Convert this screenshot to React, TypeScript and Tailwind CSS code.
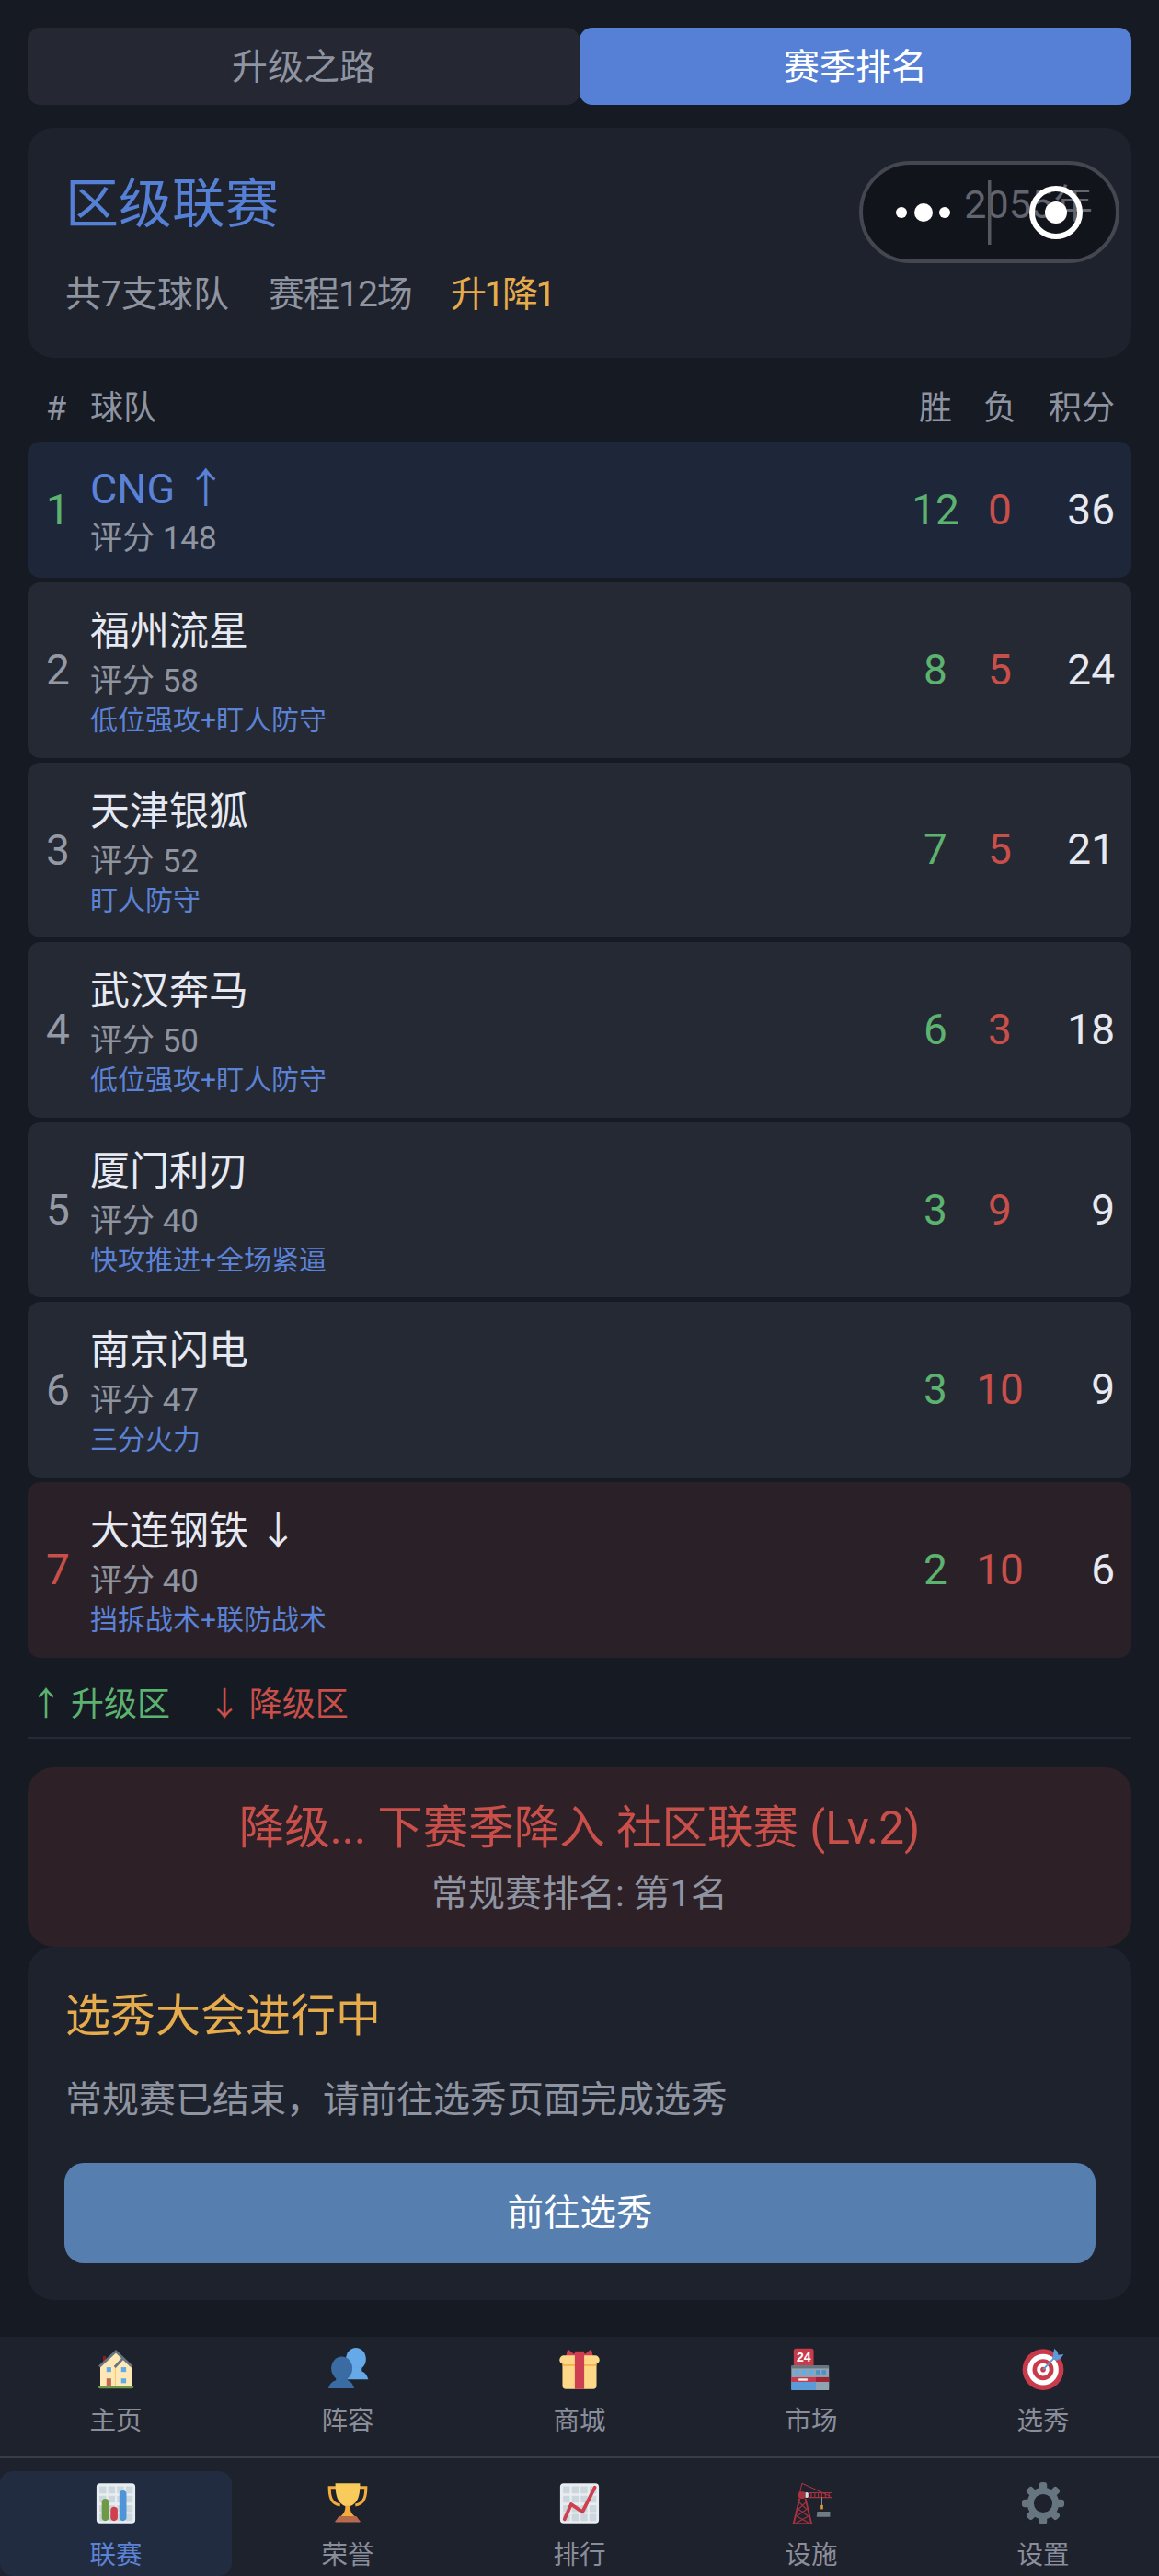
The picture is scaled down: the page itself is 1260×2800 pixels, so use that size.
const teams = [
  { rank: 1, name: "CNG ↑", score: "评分 148", tag: "", w: 12, l: 0, pts: 36, kind: "me" },
  { rank: 2, name: "福州流星", score: "评分 58", tag: "低位强攻+盯人防守", w: 8, l: 5, pts: 24, kind: "" },
  { rank: 3, name: "天津银狐", score: "评分 52", tag: "盯人防守", w: 7, l: 5, pts: 21, kind: "" },
  { rank: 4, name: "武汉奔马", score: "评分 50", tag: "低位强攻+盯人防守", w: 6, l: 3, pts: 18, kind: "" },
  { rank: 5, name: "厦门利刃", score: "评分 40", tag: "快攻推进+全场紧逼", w: 3, l: 9, pts: 9, kind: "" },
  { rank: 6, name: "南京闪电", score: "评分 47", tag: "三分火力", w: 3, l: 10, pts: 9, kind: "" },
  { rank: 7, name: "大连钢铁 ↓", score: "评分 40", tag: "挡拆战术+联防战术", w: 2, l: 10, pts: 6, kind: "down" },
];

function Grid() {
  const cells = [];
  for (const x of [4, 11.5, 19, 26.5]) {
    for (const y of [3.5, 11.5, 19.5, 27]) {
      cells.push(<rect key={x + "-" + y} x={x} y={y} width="5.8" height="6" rx="0.6" fill="#CCD6DD" />);
    }
  }
  return (
    <>
      <rect x="1.5" y="1" width="33" height="34" rx="3" fill="#E8EDF1" />
      {cells}
    </>
  );
}

function Icon({ name }: { name: string }) {
  return (
    <svg viewBox="0 0 36 36" className="w-[46px] h-[46px] shrink-0">
      {name === "home" && (
        <>
          <rect x="7" y="7" width="2.4" height="6" fill="#8F1C24" />
          <path d="M4.700 15.500 18 3 31.300 15.500V33H4.700z" fill="#FFE8B6" />
          <path d="M17.500 16V33" stroke="#F4C86F" strokeWidth="0.800" />
          <path d="M3.900 16 18 3 31.700 16" fill="none" stroke="#66757F" strokeWidth="2.200" />
          <path d="M17 16.500 24 9" fill="none" stroke="#66757F" strokeWidth="2.200" />
          <rect x="10" y="16.500" width="4" height="4" fill="#5DADEC" />
          <rect x="22.500" y="16.500" width="4.200" height="4" fill="#5DADEC" />
          <rect x="22.500" y="26" width="4.200" height="4" fill="#5DADEC" />
          <rect x="10" y="26" width="4" height="6.500" fill="#C1694F" />
          <rect x="3" y="32" width="30" height="2.600" rx="1.300" fill="#6C9A4A" />
        </>
      )}
      {name === "team" && (
        <>
          <ellipse cx="25" cy="9.500" rx="8.500" ry="9.500" fill="#65A9E8" />
          <path d="M20 17h10v3c3 1 4.500 3.500 5.500 6.800H16c1-3.300 2-5.800 4-6.800z" fill="#65A9E8" />
          <ellipse cx="13" cy="17.500" rx="9" ry="10" fill="#3A6CA3" />
          <path d="M8 25h10v2.500c3 1 4.500 3.500 5.500 7H1.500c1-3.500 3-6 6.500-7z" fill="#3A6CA3" />
        </>
      )}
      {name === "gift" && (
        <>
          <path d="M8 1 13 5 18 3.500 23 5 28 1l2 8H6z" fill="#CF3F52" />
          <path d="M3.500 14V32a3 3 0 0 0 3 3h23a3 3 0 0 0 3-3V14z" fill="#FDD888" />
          <rect x="3.500" y="13.500" width="29" height="2" fill="#F4A93C" opacity="0.8" />
          <rect x="1" y="6.500" width="34" height="7.500" rx="3.700" fill="#FDD888" />
          <rect x="14" y="3" width="8" height="32" fill="#CF3F52" />
        </>
      )}
      {name === "market" && (
        <>
          <rect x="3" y="0.500" width="17" height="15.500" rx="2" fill="#C93A4A" />
          <text x="11.500" y="12" textAnchor="middle" fontSize="11" fontWeight="700" fill="#fff" fontFamily="Liberation Sans, sans-serif">24</text>
          <rect x="1" y="15" width="32" height="21" rx="1.500" fill="#8FA3B3" />
          <rect x="1" y="15" width="32" height="2.500" fill="#66757F" />
          <rect x="4" y="19" width="3.500" height="3.500" fill="#5DADEC" />
          <rect x="10" y="19" width="3.500" height="3.500" fill="#5DADEC" />
          <rect x="16" y="19" width="3.500" height="3.500" fill="#5DADEC" />
          <rect x="22" y="19" width="3.500" height="3.500" fill="#4A90C8" />
          <rect x="27" y="19" width="3.500" height="3.500" fill="#4A90C8" />
          <rect x="1" y="25" width="32" height="4" fill="#C93A4A" />
          <rect x="22" y="25" width="11" height="4" fill="#A0232F" />
          <rect x="7" y="26" width="8" height="2" rx="1" fill="#F5E6E8" />
          <rect x="1" y="29" width="21" height="7" fill="#5B9BD8" />
          <rect x="22" y="29" width="11" height="7" fill="#8FA3B3" />
        </>
      )}
      {name === "target" && (
        <>
          <circle cx="18" cy="18.500" r="17.500" fill="#C93A4A" />
          <circle cx="18" cy="18.500" r="13.200" fill="#fff" />
          <circle cx="18" cy="18.500" r="9" fill="#C93A4A" />
          <circle cx="18" cy="18.500" r="5.300" fill="#fff" />
          <circle cx="18" cy="18.500" r="2.200" fill="#C93A4A" />
          <path d="M18 18.500 29 7" stroke="#5B9BD8" strokeWidth="1.500" />
          <path d="M26 9 27.500 0.500 30 3 31 6 35.500 5.500 33 9 29 11z" fill="#5B9BD8" />
        </>
      )}
      {name === "league" && (
        <>
          <Grid />
          <rect x="6" y="14" width="6" height="19" rx="3" fill="#6E9A44" />
          <rect x="13.500" y="21" width="6" height="12" rx="3" fill="#CF3F4D" />
          <rect x="21" y="7" width="6" height="26" rx="3" fill="#4E94D8" />
        </>
      )}
      {name === "trophy" && (
        <>
          <path d="M9 4.500H2.500c0 7 1 14 9 15M27 4.500h6.500c0 7-1 14-9 15" fill="none" stroke="#F4AC3C" strokeWidth="2.400" />
          <path d="M7.500 1h21c0 9-1 18-10.500 20C8.500 19 7.500 10 7.500 1z" fill="#F9CB5C" />
          <path d="M16 20h4c0 4 1 7 4 9H12c3-2 4-5 4-9z" fill="#F4AC3C" />
          <path d="M11 29h14c1 0 1.500 2 3 3.500 1 .5 1 1.500 0 1.500H8c-1 0-1-1 0-1.500C9.500 31 10 29 11 29z" fill="#B9694C" />
        </>
      )}
      {name === "rank" && (
        <>
          <Grid />
          <path d="M5.300 31.500 10.900 18.800 20.500 25.300 31 4.500" fill="none" stroke="#CF3F4D" strokeWidth="3" strokeLinecap="round" strokeLinejoin="round" />
        </>
      )}
      {name === "crane" && (
        <g stroke="#A8323E" fill="none">
          <path d="M3 35 8 14M18 35 13 14M2 35.300H19" strokeWidth="1.500" />
          <path d="M7.500 17 14 23 5.500 29 16.500 35M13.500 17 7 23 15.500 29 4.500 35" strokeWidth="0.900" />
          <path d="M10 1 8 10M10 1 34 12" strokeWidth="0.800" />
          <rect x="7" y="8" width="6" height="6" rx="2" fill="#A8323E" strokeWidth="0" />
          <rect x="13" y="8.700" width="2.500" height="4.500" fill="#D9DEE2" stroke="none" />
          <path d="M15 9h21M15 13h21" strokeWidth="0.900" />
          <path d="M18 9v4M21 9v4M24 9v4M27 9v4M30 9v4M33 9v4" strokeWidth="0.900" />
          <path d="M27 13v8" stroke="#A7B1B8" strokeWidth="0.600" />
          <rect x="26" y="19.500" width="2" height="3.500" fill="#E8982E" stroke="none" />
          <path d="M23 25h11v4.500H22.500z" fill="#707C85" stroke="none" />
        </g>
      )}
      {name === "gear" && (
        <>
          <circle cx="18" cy="18" r="10.700" fill="none" stroke="#66757F" strokeWidth="5.600" />
          {[0, 45, 90, 135, 180, 225, 270, 315].map((a) => (
            <rect key={a} x="14.700" y="0" width="6.600" height="7" rx="2.400" fill="#66757F" transform={`rotate(${a} 18 18)`} />
          ))}
        </>
      )}
    </svg>
  );
}

const navTop = [
  { icon: "home", label: "主页" },
  { icon: "team", label: "阵容" },
  { icon: "gift", label: "商城" },
  { icon: "market", label: "市场" },
  { icon: "target", label: "选秀" },
];

const navBottom = [
  { icon: "league", label: "联赛", active: true },
  { icon: "trophy", label: "荣誉" },
  { icon: "rank", label: "排行" },
  { icon: "crane", label: "设施" },
  { icon: "gear", label: "设置" },
];

function NavItem({ icon, label, active }: { icon: string; label: string; active?: boolean }) {
  return (
    <div className={active ? "h-[114px] flex flex-col items-center pt-[12px] rounded-[14px] bg-[#222c40]" : "h-[114px] flex flex-col items-center pt-[12px]"}>
      <Icon name={icon} />
      <span className={active ? "mt-[14px] text-[28.5px] leading-[40px] text-[#5b82d6]" : "mt-[14px] text-[28.5px] leading-[40px] text-[#8a8e9a]"}>{label}</span>
    </div>
  );
}

function TeamRow({ team }: { team: (typeof teams)[number] }) {
  const bg = team.kind === "me" ? "bg-[#1e273a]" : team.kind === "down" ? "bg-[#2a2128]" : "bg-[#252933]";
  const rankColor = team.rank === 1 ? "text-[#5cb26f]" : team.kind === "down" ? "text-[#c94f4a]" : "text-[#9499a6]";
  return (
    <div className={`flex items-center rounded-[14px] pl-[20px] pr-[18px] ${bg} ${team.kind === "me" ? "h-[148px]" : "h-[190.6px]"}`}>
      <div className={`w-[48px] text-[46px] leading-none ${rankColor}`}>{team.rank}</div>
      <div className={`flex-1 self-start ${team.kind === "me" ? "pt-[25px]" : "pt-[25px]"}`}>
        <div className={team.kind === "me" ? "text-[45px] leading-[54px] text-[#5b82d6]" : "text-[43px] leading-[56px] text-[#e6e9f2]"}>{team.name}</div>
        <div className="text-[35px] leading-[54px] text-[#8f94a1]">{team.score}</div>
        {team.tag && <div className="text-[30px] leading-[30px] text-[#5b82d6]">{team.tag}</div>}
      </div>
      <div className="w-[70px] text-center text-[46px] text-[#5cb26f]">{team.w}</div>
      <div className="w-[70px] text-center text-[46px] text-[#c94f4a]">{team.l}</div>
      <div className="w-[90px] text-right text-[46px] text-[#e6e9f2]">{team.pts}</div>
    </div>
  );
}

export default function App() {
  return (
    <div className="w-[1260px] h-[2800px] flex flex-col bg-[#161a23] font-['Roboto','Noto_Sans_CJK_SC',sans-serif]">
      <div className="h-[2540px] px-[30px] pt-[30px]">
        <div className="flex h-[84px] text-[39px]">
          <div className="flex-1 flex items-center justify-center rounded-[14px] bg-[#252833] pt-[2px] text-[#8f94a1]">升级之路</div>
          <div className="flex-1 flex items-center justify-center rounded-[14px] bg-[#5680d6] pt-[2px] text-white">赛季排名</div>
        </div>

        <div className="relative mt-[25px] h-[250px] rounded-[28px] bg-[#1e222d] pl-[41px] pr-[42px] pt-[51px]">
          <div className="absolute top-[36px] right-[13px] w-[283px] h-[111px] rounded-full border-[4px] border-[#44474f] bg-[#12141b]" />
          <div className="flex items-center justify-between h-[64px]">
            <h1 className="text-[58px] leading-[64px] text-[#5680d6]">区级联赛</h1>
            <span className="relative z-10 text-[43px] text-[#62656f]">2055年</span>
          </div>
          <div className="mt-[41px] flex text-[39px] leading-[50px] text-[#8f94a1]">
            <span className="w-[221px]">共7支球队</span>
            <span className="w-[198px] tracking-[-1px]">赛程12场</span>
            <span className="tracking-[-2.5px] text-[#e6ac4c]">升1降1</span>
          </div>
          <svg viewBox="0 0 283 111" className="absolute z-20 top-[36px] right-[13px] w-[283px] h-[111px]">
            <circle cx="46" cy="56" r="6" fill="#fff" />
            <circle cx="70" cy="56" r="10" fill="#fff" />
            <circle cx="93" cy="56" r="6" fill="#fff" />
            <rect x="140" y="21" width="3.500" height="70" fill="#55585f" />
            <circle cx="214" cy="56" r="26" fill="none" stroke="#fff" strokeWidth="6" />
            <circle cx="214" cy="56" r="12" fill="#fff" />
          </svg>
        </div>

        <div className="flex items-center h-[50px] mt-[30px] mb-[11px] pl-[20px] pr-[18px] text-[36px] text-[#8f94a1]">
          <span className="w-[48px]">#</span>
          <span className="flex-1">球队</span>
          <span className="w-[70px] text-center">胜</span>
          <span className="w-[70px] text-center">负</span>
          <span className="w-[90px] text-right">积分</span>
        </div>

        <div className="flex flex-col gap-[5px]">
          {teams.map((t) => (
            <TeamRow key={t.rank} team={t} />
          ))}
        </div>

        <div className="mt-[26px] h-[62px] flex items-start border-b-[2px] border-[#252a38] text-[36px] leading-[50px]">
          <span className="ml-[2px] text-[#5cb26f]">↑ 升级区</span>
          <span className="ml-[41px] text-[#c94f4a]">↓ 降级区</span>
        </div>

        <div className="mt-[31px] h-[195px] rounded-[28px] bg-[#2d2027] pt-[34px] text-center">
          <div className="text-[49.5px] leading-[64px] text-[#c94f4a]">降级... 下赛季降入 社区联赛 (Lv.2)</div>
          <div className="mt-[15px] text-[40px] leading-[50px] text-[#8f94a1]">常规赛排名: 第1名</div>
        </div>

        <div className="h-[384px] rounded-[28px] bg-[#1e222d] pl-[40px] pr-[39px] pt-[44px]">
          <div className="pl-[1px] text-[49px] leading-[64px] text-[#e6ac4c]">选秀大会进行中</div>
          <div className="mt-[34px] pl-[1px] text-[40px] leading-[50px] text-[#8f94a1]">常规赛已结束，请前往选秀页面完成选秀</div>
          <div className="mt-[43px] h-[109px] rounded-[21px] bg-[#567fb0] pt-[2px] flex items-center justify-center text-[39.5px] text-white">前往选秀</div>
        </div>
      </div>

      <div className="bg-[#1e222d] flex-1">
        <div className="grid grid-cols-5 h-[130px]">
          {navTop.map((n) => (
            <NavItem key={n.label} {...n} />
          ))}
        </div>
        <div className="grid grid-cols-5 border-t-[2px] border-[#3a3c46] pt-[14px]">
          {navBottom.map((n) => (
            <NavItem key={n.label} {...n} />
          ))}
        </div>
      </div>
    </div>
  );
}
